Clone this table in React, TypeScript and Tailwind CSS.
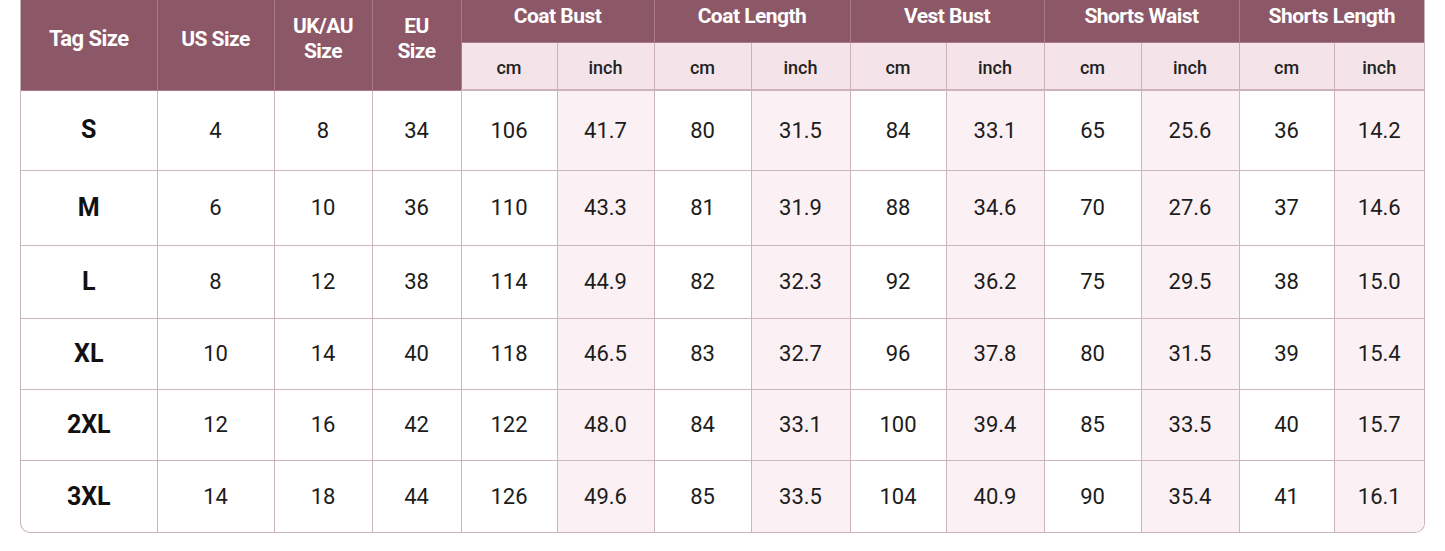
import React from 'react';

const groups = ['Coat Bust', 'Coat Length', 'Vest Bust', 'Shorts Waist', 'Shorts Length'];

const rows: { tag: string; us: string; uk: string; eu: string; values: string[]; h: string }[] = [
  { tag: 'S', us: '4', uk: '8', eu: '34', values: ['106', '41.7', '80', '31.5', '84', '33.1', '65', '25.6', '36', '14.2'], h: 'h-[80px]' },
  { tag: 'M', us: '6', uk: '10', eu: '36', values: ['110', '43.3', '81', '31.9', '88', '34.6', '70', '27.6', '37', '14.6'], h: 'h-[75px]' },
  { tag: 'L', us: '8', uk: '12', eu: '38', values: ['114', '44.9', '82', '32.3', '92', '36.2', '75', '29.5', '38', '15.0'], h: 'h-[73px]' },
  { tag: 'XL', us: '10', uk: '14', eu: '40', values: ['118', '46.5', '83', '32.7', '96', '37.8', '80', '31.5', '39', '15.4'], h: 'h-[71px]' },
  { tag: '2XL', us: '12', uk: '16', eu: '42', values: ['122', '48.0', '84', '33.1', '100', '39.4', '85', '33.5', '40', '15.7'], h: 'h-[71px]' },
  { tag: '3XL', us: '14', uk: '18', eu: '44', values: ['126', '49.6', '85', '33.5', '104', '40.9', '90', '35.4', '41', '16.1'], h: 'h-[72px]' },
];

const cols = [136, 117, 98, 89, 96, 97, 97, 99, 96, 98, 97, 98, 95, 90];

export default function App() {
  return (
    <div className="w-[1445px] h-[551px] bg-white" style={{ fontFamily: 'Roboto, "Liberation Sans", sans-serif' }}>
      <div className="ml-[20px] w-[1405px] border-l border-r border-b border-[#cbb3ba] rounded-b-[10px] overflow-hidden">
        <table className="table-fixed border-collapse w-[1403px] text-[#1c1c1c]">
          <colgroup>
            {cols.map((w, i) => (
              <col key={i} style={{ width: w }} />
            ))}
          </colgroup>
          <thead>
            <tr className="h-[42px] bg-[#8c5766] text-white">
              <th rowSpan={2} className="border-r border-b border-[#a97a87] text-[22px] font-bold leading-tight tracking-tight pb-[12px]">Tag Size</th>
              <th rowSpan={2} className="border-r border-b border-[#a97a87] text-[21px] font-bold leading-tight tracking-tight pb-[12px]">US Size</th>
              <th rowSpan={2} className="border-r border-b border-[#a97a87] text-[21px] font-bold leading-[25px] tracking-tight pb-[12px]">UK/AU<br />Size</th>
              <th rowSpan={2} className="border-r border-b border-[#a97a87] text-[21px] font-bold leading-[25px] tracking-tight pb-[12px]">EU<br />Size</th>
              {groups.map((g, i) => (
                <th
                  key={g}
                  colSpan={2}
                  className={`border-b border-[#a97a87] text-[21px] font-bold tracking-tight pb-[8px] ${i < groups.length - 1 ? 'border-r' : ''}`}
                >
                  {g}
                </th>
              ))}
            </tr>
            <tr className="h-[48px] bg-[#f4e4e9]">
              {groups.flatMap((g, i) => [
                <th key={g + 'cm'} className="border-r border-b-2 border-[#cdb2ba] text-[18px] font-medium text-[#222] pt-[4px]">cm</th>,
                <th
                  key={g + 'in'}
                  className={`border-b-2 border-[#cdb2ba] text-[18px] font-medium text-[#222] pt-[4px] ${i < groups.length - 1 ? 'border-r' : ''}`}
                >
                  inch
                </th>,
              ])}
            </tr>
          </thead>
          <tbody>
            {rows.map((r, ri) => {
              const last = ri === rows.length - 1;
              const b = `border-[#cdb5bc] border-r ${last ? '' : 'border-b'}`;
              return (
                <tr key={r.tag} className={r.h}>
                  <td className={`${b} text-center text-[25px] font-bold text-[#111]`}>{r.tag}</td>
                  <td className={`${b} text-center text-[22px]`}>{r.us}</td>
                  <td className={`${b} text-center text-[22px]`}>{r.uk}</td>
                  <td className={`${b} text-center text-[22px]`}>{r.eu}</td>
                  {r.values.map((v, vi) => (
                    <td
                      key={vi}
                      className={`border-[#cdb5bc] ${last ? '' : 'border-b'} ${vi < r.values.length - 1 ? 'border-r' : ''} text-center text-[22px] ${vi % 2 === 1 ? 'bg-[#fbf0f3]' : 'bg-white'}`}
                    >
                      {v}
                    </td>
                  ))}
                </tr>
              );
            })}
          </tbody>
        </table>
      </div>
    </div>
  );
}
